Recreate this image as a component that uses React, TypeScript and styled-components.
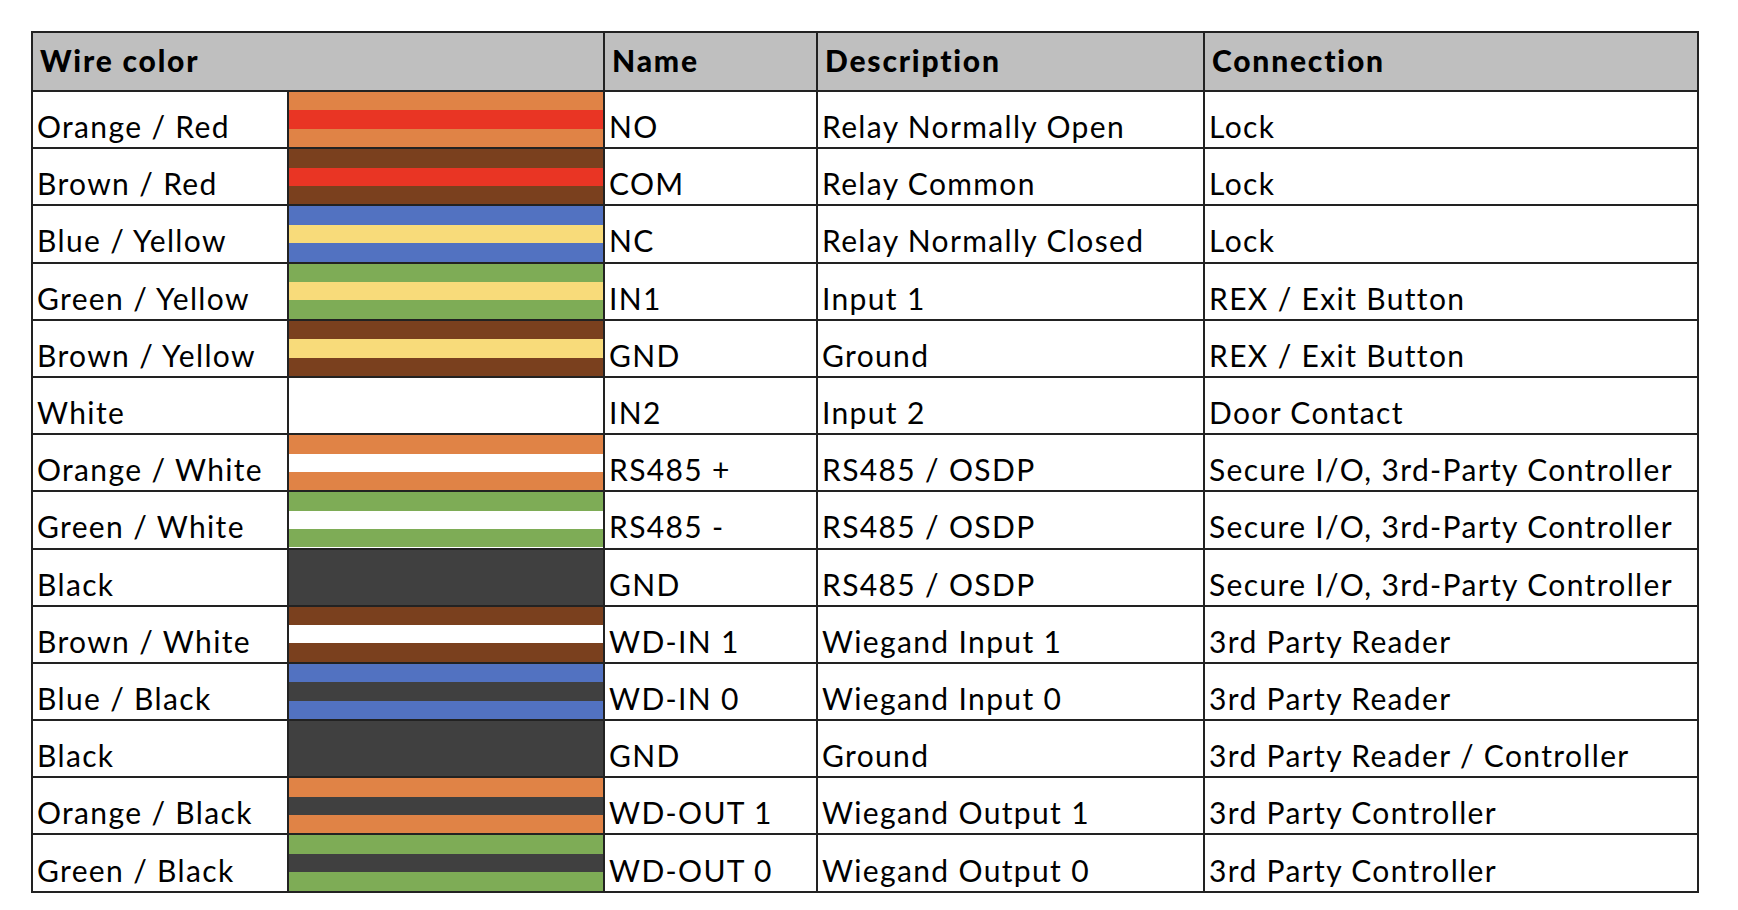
import styled, { createGlobalStyle } from "styled-components";

const GlobalStyle = createGlobalStyle`
  html, body {
    margin: 0;
    padding: 0;
    background: #ffffff;
  }
`;

const colors = {
  orange: "#E08346",
  red: "#E93524",
  brown: "#7A401E",
  blue: "#5272C1",
  yellow: "#F8DB7A",
  green: "#7EAC56",
  black: "#404040",
  white: "#FFFFFF",
};

type WireRow = {
  label: string;
  outer?: string;
  inner?: string;
  name: string;
  description: string;
  connection: string;
};

const rows: WireRow[] = [
  { label: "Orange / Red", outer: colors.orange, inner: colors.red, name: "NO", description: "Relay Normally Open", connection: "Lock" },
  { label: "Brown / Red", outer: colors.brown, inner: colors.red, name: "COM", description: "Relay Common", connection: "Lock" },
  { label: "Blue / Yellow", outer: colors.blue, inner: colors.yellow, name: "NC", description: "Relay Normally Closed", connection: "Lock" },
  { label: "Green / Yellow", outer: colors.green, inner: colors.yellow, name: "IN1", description: "Input 1", connection: "REX / Exit Button" },
  { label: "Brown / Yellow", outer: colors.brown, inner: colors.yellow, name: "GND", description: "Ground", connection: "REX / Exit Button" },
  { label: "White", name: "IN2", description: "Input 2", connection: "Door Contact" },
  { label: "Orange / White", outer: colors.orange, inner: colors.white, name: "RS485 +", description: "RS485 / OSDP", connection: "Secure I/O, 3rd-Party Controller" },
  { label: "Green / White", outer: colors.green, inner: colors.white, name: "RS485 -", description: "RS485 / OSDP", connection: "Secure I/O, 3rd-Party Controller" },
  { label: "Black", outer: colors.black, inner: colors.black, name: "GND", description: "RS485 / OSDP", connection: "Secure I/O, 3rd-Party Controller" },
  { label: "Brown / White", outer: colors.brown, inner: colors.white, name: "WD-IN 1", description: "Wiegand Input 1", connection: "3rd Party Reader" },
  { label: "Blue / Black", outer: colors.blue, inner: colors.black, name: "WD-IN 0", description: "Wiegand Input 0", connection: "3rd Party Reader" },
  { label: "Black", outer: colors.black, inner: colors.black, name: "GND", description: "Ground", connection: "3rd Party Reader / Controller" },
  { label: "Orange / Black", outer: colors.orange, inner: colors.black, name: "WD-OUT 1", description: "Wiegand Output 1", connection: "3rd Party Controller" },
  { label: "Green / Black", outer: colors.green, inner: colors.black, name: "WD-OUT 0", description: "Wiegand Output 0", connection: "3rd Party Controller" },
];

const Page = styled.div`
  padding: 31px 0 0 31px;
  font-family: Lato, "Liberation Sans", sans-serif;
  color: #000;
`;

const Table = styled.div`
  display: grid;
  width: max-content;
  grid-template-columns: 254px 314px 211px 385px 492px;
  grid-template-rows: 57px repeat(14, 55.2px);
  gap: 2px;
  padding: 2px;
  background: #222;
`;

const HeaderCell = styled.div<{ $span?: number }>`
  grid-column: span ${({ $span }) => $span ?? 1};
  display: flex;
  align-items: center;
  padding: 0 7px 4px;
  background: #bfbfbf;
  font-size: 30px;
  font-weight: 900;
  letter-spacing: 1.8px;
  white-space: nowrap;
`;

const Cell = styled.div`
  display: flex;
  align-items: center;
  padding: 13px 4px 0;
  background: #fff;
  font-size: 30px;
  font-weight: 400;
  letter-spacing: 1.35px;
  white-space: nowrap;
`;

const Swatch = styled.div`
  display: flex;
  flex-direction: column;
  background: #fff;
`;

const Stripe = styled.div<{ $color: string }>`
  flex: 1;
  background: ${({ $color }) => $color};
`;

function WireSwatch({ outer, inner }: { outer?: string; inner?: string }) {
  if (!outer || !inner) return <Swatch />;

  return (
    <Swatch>
      <Stripe $color={outer} />
      <Stripe $color={inner} />
      <Stripe $color={outer} />
    </Swatch>
  );
}

function Row({ row }: { row: WireRow }) {
  return (
    <>
      <Cell>{row.label}</Cell>
      <WireSwatch outer={row.outer} inner={row.inner} />
      <Cell>{row.name}</Cell>
      <Cell>{row.description}</Cell>
      <Cell>{row.connection}</Cell>
    </>
  );
}

export default function App() {
  return (
    <Page>
      <GlobalStyle />
      <Table>
        <HeaderCell $span={2}>Wire color</HeaderCell>
        <HeaderCell>Name</HeaderCell>
        <HeaderCell>Description</HeaderCell>
        <HeaderCell>Connection</HeaderCell>

        {rows.map((row, i) => (
          <Row key={i} row={row} />
        ))}
      </Table>
    </Page>
  );
}
